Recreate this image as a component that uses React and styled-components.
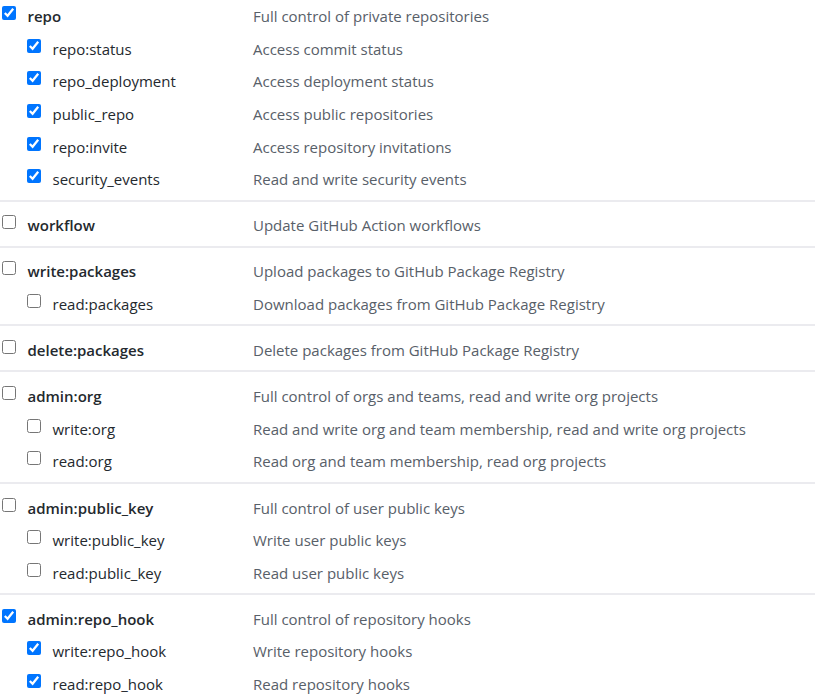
import React from "react";
import styled, { createGlobalStyle } from "styled-components";

const GlobalStyle = createGlobalStyle`
  body {
    margin: 0;
    background: #ffffff;
    font-family: "Open Sans", "Noto Sans", "Liberation Sans", sans-serif;
  }
`;

const List = styled.div`
  width: 815px;
`;

const Group = styled.div`
  padding: ${(p) => (p.first ? "0" : "7.5px")} 0 4px;
  border-bottom: ${(p) => (p.last ? "none" : "2px solid #ebebef")};
`;

const Row = styled.div`
  display: flex;
  align-items: center;
  height: 32.6px;
`;

const Scope = styled.label`
  display: flex;
  align-items: center;
  width: ${(p) => (p.sub ? 228 : 253)}px;
  padding-left: ${(p) => (p.sub ? 25 : 0)}px;
  font-size: 15px;
  font-weight: ${(p) => (p.sub ? 400 : 600)};
  color: #24292e;
`;

const Box = styled.input`
  width: 14px;
  height: 14px;
  margin: 0 12px 6px 1.5px;
  accent-color: #0075ff;
`;

const Desc = styled.span`
  font-size: 15px;
  color: #586069;
`;

const groups = [
  [
    ["repo", "Full control of private repositories", true],
    ["repo:status", "Access commit status", true],
    ["repo_deployment", "Access deployment status", true],
    ["public_repo", "Access public repositories", true],
    ["repo:invite", "Access repository invitations", true],
    ["security_events", "Read and write security events", true],
  ],
  [["workflow", "Update GitHub Action workflows", false]],
  [
    ["write:packages", "Upload packages to GitHub Package Registry", false],
    ["read:packages", "Download packages from GitHub Package Registry", false],
  ],
  [["delete:packages", "Delete packages from GitHub Package Registry", false]],
  [
    ["admin:org", "Full control of orgs and teams, read and write org projects", false],
    ["write:org", "Read and write org and team membership, read and write org projects", false],
    ["read:org", "Read org and team membership, read org projects", false],
  ],
  [
    ["admin:public_key", "Full control of user public keys", false],
    ["write:public_key", "Write user public keys", false],
    ["read:public_key", "Read user public keys", false],
  ],
  [
    ["admin:repo_hook", "Full control of repository hooks", true],
    ["write:repo_hook", "Write repository hooks", true],
    ["read:repo_hook", "Read repository hooks", true],
  ],
];

export default function App() {
  return (
    <>
      <GlobalStyle />
      <List>
        {groups.map((g, gi) => (
          <Group key={gi} first={gi === 0} last={gi === groups.length - 1}>
            {g.map(([name, desc, checked], i) => (
              <Row key={name}>
                <Scope sub={i > 0}>
                  <Box type="checkbox" defaultChecked={checked} />
                  {name}
                </Scope>
                <Desc>{desc}</Desc>
              </Row>
            ))}
          </Group>
        ))}
      </List>
    </>
  );
}
